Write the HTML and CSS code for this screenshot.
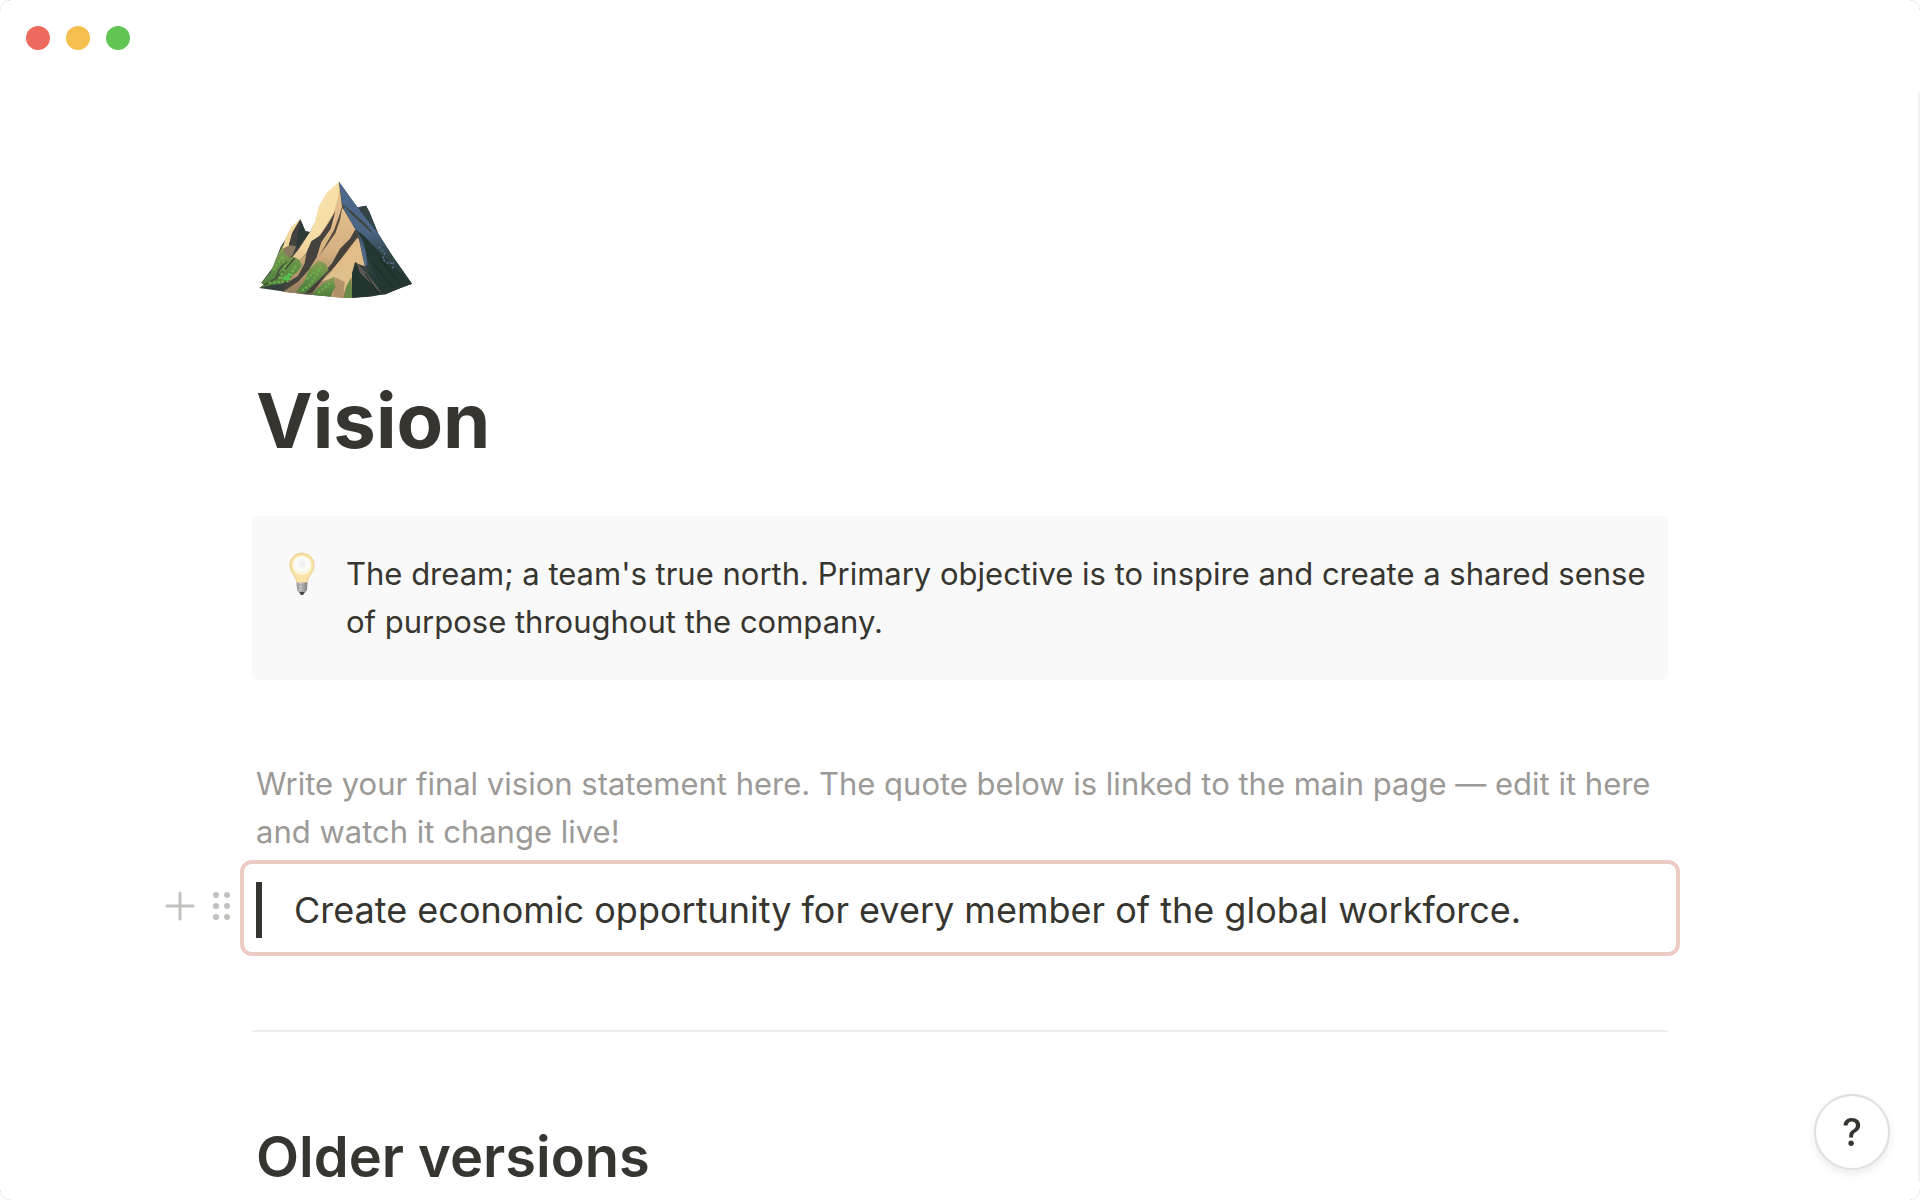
FILE: index.html
```html
<!DOCTYPE html>
<html lang="en">
  <head>
    <meta charset="UTF-8" />
    <meta name="viewport" content="width=device-width, initial-scale=1.0" />
    <title>Vision</title>
    <link rel="stylesheet" href="styles.css">
  </head>
  <body>
    <div class="window">
      <span class="corner corner-tl"></span>
      <span class="corner corner-tr"></span>
      <span class="corner corner-bl"></span>
      <span class="corner corner-br"></span>

      <header class="titlebar">
        <button class="dot dot-close" aria-label="Close"></button>
        <button class="dot dot-minimize" aria-label="Minimize"></button>
        <button class="dot dot-zoom" aria-label="Zoom"></button>
      </header>

      <main class="page">
        <!-- mountain -->
        <svg class="page-icon" viewBox="6 0 504 420" aria-hidden="true">
          <defs>
            <linearGradient id="rock" x1="0" y1="0" x2="0" y2="1">
              <stop offset="0" stop-color="#e9c796" />
              <stop offset="0.6" stop-color="#d6b080" />
              <stop offset="1" stop-color="#8c7658" />
            </linearGradient>
            <linearGradient id="shade" x1="0" y1="0" x2="0" y2="1">
              <stop offset="0" stop-color="#4d698c" />
              <stop offset="0.45" stop-color="#4b6585" />
              <stop offset="0.65" stop-color="#304647" />
              <stop offset="1" stop-color="#20342e" />
            </linearGradient>
            <linearGradient id="cream" x1="0" y1="0" x2="0" y2="1">
              <stop offset="0" stop-color="#f7e1aa" />
              <stop offset="0.7" stop-color="#f5dda5" />
              <stop offset="1" stop-color="#e5c18c" />
            </linearGradient>
            <linearGradient id="grass" x1="0" y1="0" x2="0" y2="1">
              <stop offset="0" stop-color="#8d9c55" />
              <stop offset="0.5" stop-color="#629047" />
              <stop offset="1" stop-color="#4e7c3b" />
            </linearGradient>
          </defs>
          <path fill="#35413c" d="M322 112L348 107L358 126L384 190L430 262L486 341L460 350L402 373L360 380L300 384L160 373L96 364L28 354L42 344L34 338L70 290L92 230L118 190L151 148L166 184L180 186L205 140L210 104L240 70L267 35Z" />
          <path fill="url(#rock)" d="M267 35L276 110L316 178L345 290L320 275L300 384L100 366L150 270L205 220L240 70Z" />
          <path fill="#f2d59a" d="M151 148L126 190L116 228L96 240L108 200L124 171Z" />
          <path fill="#43423f" d="M151 148L166 184L180 186L130 262L112 252L118 220L130 184Z" />
          <path fill="#2c3a38" d="M153 154L166 184L178 188L140 236L142 190Z" />
          <path fill="#8b7960" d="M118 226L138 228L128 256L108 270L92 240Z" />
          <path fill="url(#cream)" d="M267 35L264 82L250 130L230 162L208 198L184 214L170 250L142 278L122 268L146 238L180 186L194 158L207 108L231 67Z" />
          <path fill="url(#shade)" d="M267 35L322 112L348 107L358 126L384 190L430 262L486 341L402 373L360 330L342 236L316 178L278 110Z" />
          <path fill="#334346" d="M348 107L358 126L384 190L352 150L324 114Z" />
          <path fill="#263733" d="M354 268L340 214L316 178L340 196L396 254L486 341L460 350L404 374Z" />
          <path fill="#5a4c3f" d="M278 104L284 114L276 116L270 150L256 190L236 218L208 258L226 226L252 180L266 142Z" />
          <path fill="#46423d" d="M256 124L242 176L214 216L200 262L176 300L146 334L98 366L102 344L144 318L164 280L170 246L186 214L208 200L236 158Z" />
          <path fill="#414541" d="M278 103L312 130L350 166L378 200L340 166L298 126Z" />
          <path fill="#46413a" d="M316 178L324 200L298 234L262 284L228 316L186 370L160 372L204 330L246 280L270 236L300 206Z" />
          <path fill="#e2bd89" d="M326 204L334 240L344 288L312 278L282 292L246 300L290 246Z" />
          <path fill="#53698a" d="M328 206L346 240L352 286L344 288Z" />
          <path fill="#dfc08c" d="M312 276L306 320L288 350L278 384L246 380L254 322L216 334L250 300Z" />
          <path fill="#b29068" d="M256 322L284 336L280 384L248 381Z" />
          <path fill="url(#grass)" d="M98 226L104 250L116 262L134 262L148 270L156 288L142 306L122 320L96 342L70 344L28 354L42 344L34 338L62 306L80 262Z" />
          <path fill="url(#grass)" d="M204 272L226 280L236 300L206 330L164 370L138 366L164 332L176 300Z" />
          <path fill="url(#grass)" d="M220 340L252 320L256 352L240 380L184 374Z" />
          <path fill="#688c46" d="M302 324L308 384L282 384L290 348Z" />
          <path fill="#24342f" d="M316 275L344 306L402 373L306 384L306 310Z" />
          <path fill="#5c5852" d="M318 276L360 322L400 374L374 352L330 308Z" />
          <path fill="none" stroke="#46523a" stroke-width="5" d="M42 346L80 324L112 290L134 264M78 322L88 298L110 274" />
          <path fill="none" stroke="#6fae4c" stroke-width="7" stroke-linecap="round" stroke-dasharray="2 11" d="M72 298L98 258L106 292L86 326L116 316L138 286L116 334L56 338M172 326L196 302L214 292L182 342L158 360M206 366L232 348L244 334" />
          <path fill="none" stroke="#52c34f" stroke-width="9" stroke-linecap="round" stroke-dasharray="3 12" d="M104 326L118 314L112 330" />
          <path fill="none" stroke="#587391" stroke-width="5" stroke-linecap="round" stroke-dasharray="2 10" d="M388 232L404 250L398 268L418 282L430 276L428 296" />
          <path fill="none" stroke="#16261f" stroke-width="3" d="M368 278L430 354M390 266L452 344M346 310L384 370" />
        </svg>

        <h1 class="title">Vision</h1>

        <aside class="callout">
          <!-- light bulb -->
          <svg class="callout-icon" viewBox="0 0 36 44" aria-hidden="true">
            <defs>
              <radialGradient id="glow" cx="0.5" cy="0.4" r="0.5">
                <stop offset="0" stop-color="#ececee" />
                <stop offset="0.65" stop-color="#fcfcfa" />
                <stop offset="1" stop-color="#fdf6df" />
              </radialGradient>
              <linearGradient id="cap" x1="0" y1="0" x2="1" y2="0">
                <stop offset="0" stop-color="#8e8e8e" />
                <stop offset="0.35" stop-color="#d0d0d0" />
                <stop offset="1" stop-color="#747474" />
              </linearGradient>
            </defs>
            <path fill="#fae3a5" stroke="#e8cb91" stroke-width="1" d="M18 1.3C10.8 1.3 6 6.500 6 13.300C6 18.500 8.600 20.800 10.500 24C12 26.500 12.500 28.500 13 31H23C23.500 28.500 24 26.500 25.500 24C27.400 20.800 30 18.500 30 13.300C30 6.500 25.200 1.300 18 1.300Z" />
            <circle cx="18" cy="13.500" r="9.500" fill="url(#glow)" />
            <path fill="url(#cap)" d="M12.500 30.500H23.500L23 38L20.500 41H15.500L13 38Z" />
            <path fill="none" stroke="#999" stroke-width="1" d="M13 33H23M13.500 36H22.500M14 39H22" />
            <path fill="#454545" d="M15 40H21L19 43H17Z" />
          </svg>
          <p>The dream; a team's true north. Primary objective is to inspire and create a shared sense of purpose throughout the company.</p>
        </aside>

        <p class="hint">Write your final vision statement here. The quote below is linked to the main page — edit it here and watch it change live!</p>

        <div class="block">
          <div class="block-controls">
            <button class="control" aria-label="Add block">
              <svg width="30" height="30" viewBox="0 0 30 30"><path d="M15 2V28M2 15H28" fill="none" stroke="#c2c1be" stroke-width="3" stroke-linecap="round" /></svg>
            </button>
            <button class="control" aria-label="Drag block">
              <svg width="20" height="30" viewBox="0 0 20 30" fill="#c2c1be">
                <circle cx="5" cy="4" r="3" /><circle cx="16" cy="4" r="3" />
                <circle cx="5" cy="15" r="3" /><circle cx="16" cy="15" r="3" />
                <circle cx="5" cy="26" r="3" /><circle cx="16" cy="26" r="3" />
              </svg>
            </button>
          </div>
          <div class="synced">
            <blockquote class="quote">Create economic opportunity for every member of the global workforce.</blockquote>
          </div>
        </div>

        <hr class="divider" />

        <h2 class="heading">Older versions</h2>
      </main>

      <div class="scroll-edge"></div>
      <button class="help" aria-label="Help">?</button>
    </div>
  </body>
</html>
```
FILE: styles.css
```css
* {
  box-sizing: border-box;
}
body {
  margin: 0;
  background: #fff;
  color: #37352f;
  font-family: Inter, "Liberation Sans", sans-serif;
  font-size: 31px;
  line-height: 48px;
}
h1,
h2,
p,
blockquote {
  margin: 0;
}
button {
  padding: 0;
  border: 0;
  background: none;
  color: inherit;
  font-family: inherit;
}
svg {
  display: block;
}

.window {
  position: relative;
  min-height: 100vh;
  overflow: hidden;
}
/* rounded window corners */
.corner {
  position: absolute;
  width: 10px;
  height: 10px;
  border: 0 dotted #ccc;
}
.corner-tl {
  top: 0;
  left: 0;
  border-width: 1px 0 0 1px;
  border-top-left-radius: 10px;
}
.corner-tr {
  top: 0;
  right: 0;
  border-width: 1px 1px 0 0;
  border-top-right-radius: 10px;
}
.corner-bl {
  bottom: 0;
  left: 0;
  border-width: 0 0 1px 1px;
  border-bottom-left-radius: 10px;
}
.corner-br {
  bottom: 0;
  right: 0;
  border-width: 0 1px 1px 0;
  border-bottom-right-radius: 10px;
}

.titlebar {
  display: flex;
  gap: 16px;
  padding: 26px;
}
.dot {
  width: 24px;
  height: 24px;
  border-radius: 50%;
}
.dot-close {
  background: #ec6a5e;
}
.dot-minimize {
  background: #f4bf4f;
}
.dot-zoom {
  background: #61c554;
}

.page {
  padding: 94px 252px 0;
}
.page-icon {
  width: 168px;
  height: 140px;
}
.title {
  margin-top: 62px;
  padding: 0 4px;
  font-size: 76px;
  line-height: 96px;
  font-weight: 700;
}
.callout {
  display: flex;
  gap: 26px;
  margin-top: 48px;
  padding: 34px 16px 34px 32px;
  border-radius: 6px;
  background: #f9f9f9;
}
.callout-icon {
  flex: none;
  width: 36px;
  height: 48px;
}
.hint {
  margin-top: 80px;
  padding: 0 4px;
  color: #9b9a97;
}

.block {
  display: flex;
  margin: 4px -12px 0 -88px;
}
.block-controls {
  display: flex;
  align-items: center;
  gap: 16px;
  width: 76px;
  padding: 0 0 4px 1px;
}
.synced {
  flex: 1;
  padding: 18px 12px 14px;
  border: 4px solid #eecac5;
  border-radius: 12px;
}
.quote {
  padding-left: 32px;
  border-left: 6px solid #37352f;
  font-size: 36px;
  line-height: 56px;
}
.divider {
  height: 2px;
  margin: 74px 0 0;
  border: 0;
  background: #ededec;
}
.heading {
  margin-top: 86px;
  padding: 0 4px;
  font-size: 56px;
  line-height: 78px;
  font-weight: 600;
}

.scroll-edge {
  position: absolute;
  top: 92px;
  right: 0;
  bottom: 18px;
  width: 2px;
  background: #f1f1f1;
}
.help {
  position: fixed;
  right: 30px;
  bottom: 30px;
  width: 76px;
  height: 76px;
  border: 2px solid #dfdfde;
  border-radius: 50%;
  background: #fff;
  box-shadow: 0 4px 8px rgba(15, 15, 15, 0.08);
  font-size: 38px;
  font-weight: 500;
}
```
